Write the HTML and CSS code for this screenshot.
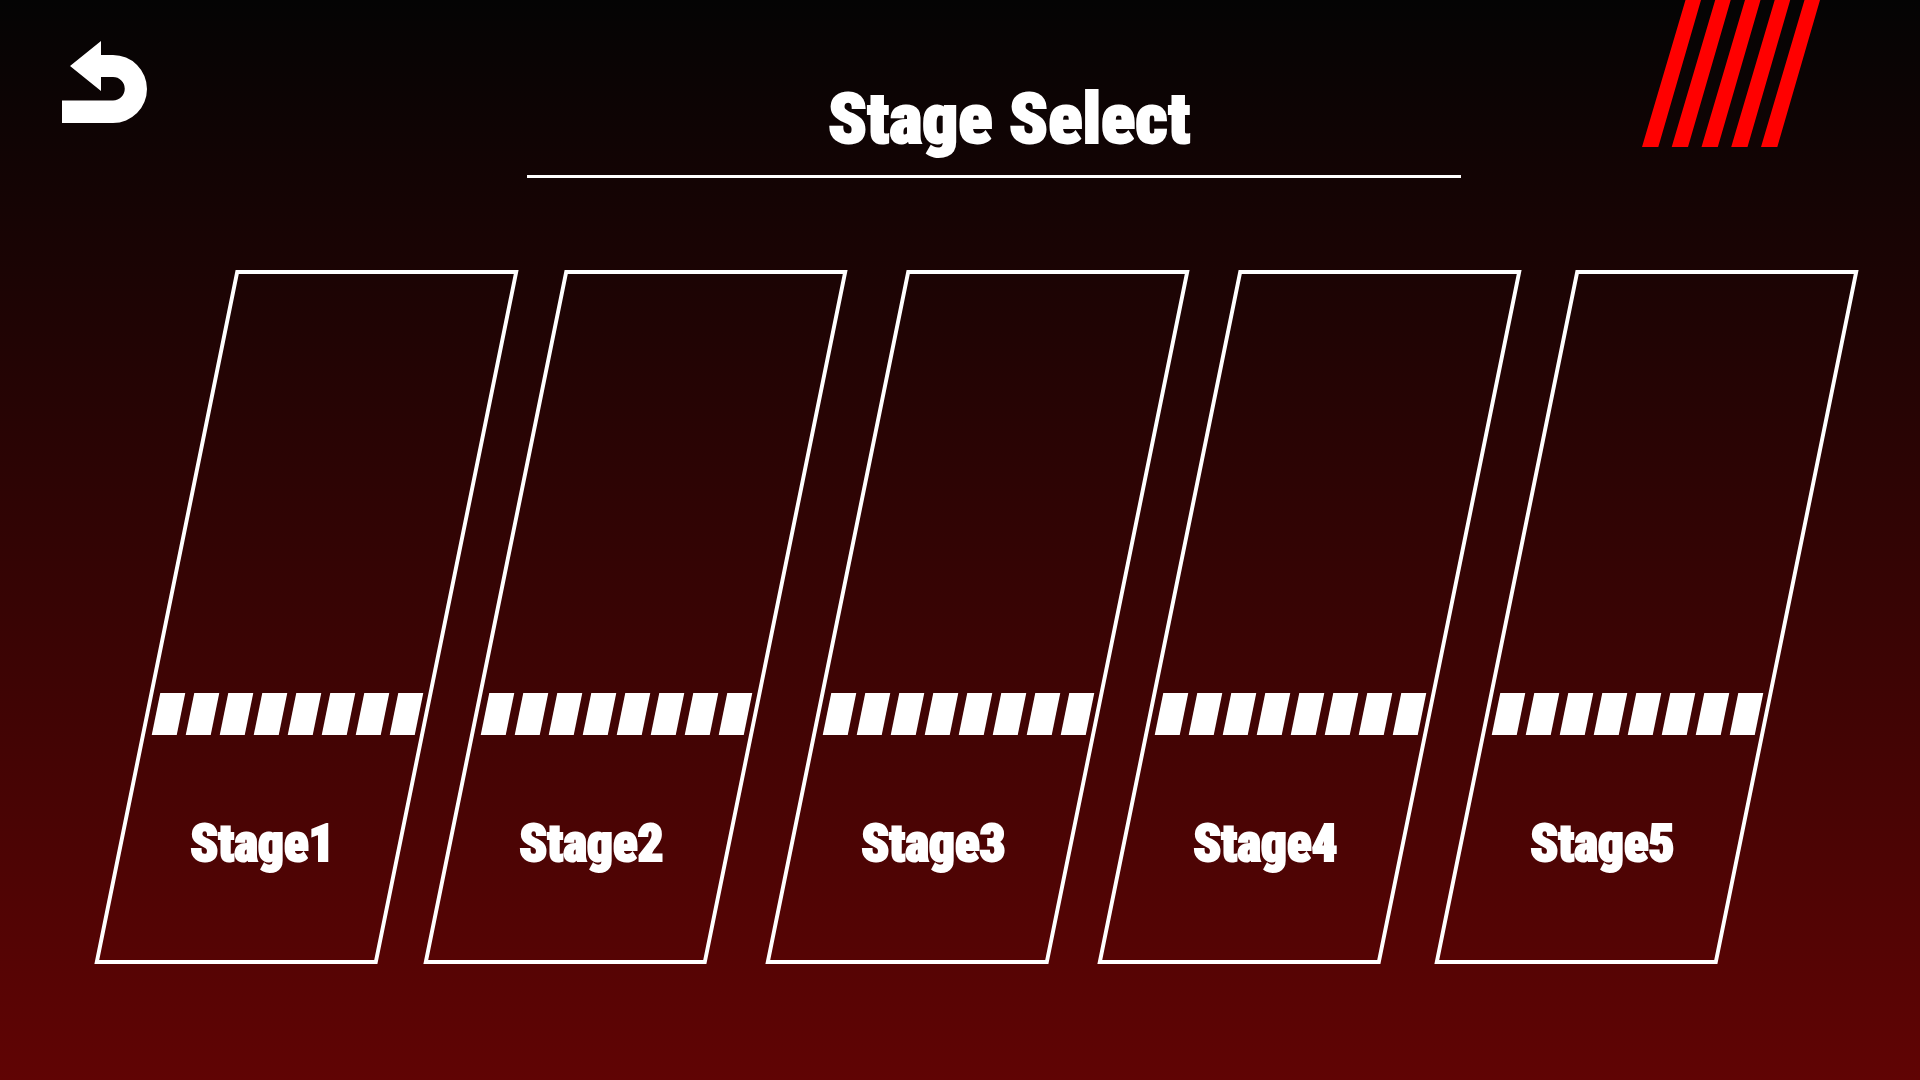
FILE: index.html
```html
<!DOCTYPE html>
<html lang="en">
<head>
  <meta charset="utf-8">
  <meta name="viewport" content="width=device-width, initial-scale=1">
  <title>Stage Select</title>
  <link rel="stylesheet" href="styles.css">
</head>
<body>
  <header class="header">
    <button class="back" type="button" aria-label="Back">
      <svg class="back-icon" viewBox="0 0 85 82" aria-hidden="true">
        <path fill="currentColor" d="M8 25 39 0V14H51A34 34 0 0 1 51 82H0V59.500H51A11.700 11.700 0 0 0 51 36H39V50Z"/>
      </svg>
    </button>
    <h1 class="title">Stage Select</h1>
    <svg class="slashes" viewBox="0 0 178 147" aria-hidden="true">
      <path fill="currentColor" d="M43.500 0H59L16.300 147H0ZM73.200 0H88.700L46 147H29.700ZM103 0H118.500L75.800 147H59.500ZM132.700 0H148.200L105.500 147H89.200ZM162.500 0H178L135.300 147H119Z"/>
    </svg>
  </header>
  <main class="stages">
    <button class="stage" type="button">
      <span class="stripes"><i></i><i></i><i></i><i></i><i></i><i></i><i></i><i></i></span>
      <span class="label">Stage1</span>
    </button>
    <button class="stage" type="button">
      <span class="stripes"><i></i><i></i><i></i><i></i><i></i><i></i><i></i><i></i></span>
      <span class="label">Stage2</span>
    </button>
    <button class="stage" type="button">
      <span class="stripes"><i></i><i></i><i></i><i></i><i></i><i></i><i></i><i></i></span>
      <span class="label">Stage3</span>
    </button>
    <button class="stage" type="button">
      <span class="stripes"><i></i><i></i><i></i><i></i><i></i><i></i><i></i><i></i></span>
      <span class="label">Stage4</span>
    </button>
    <button class="stage" type="button">
      <span class="stripes"><i></i><i></i><i></i><i></i><i></i><i></i><i></i><i></i></span>
      <span class="label">Stage5</span>
    </button>
  </main>
</body>
</html>
```
FILE: styles.css
```css
* {
  box-sizing: border-box;
}

body {
  margin: 0;
  min-height: 100vh;
  background: linear-gradient(#040404, #600404);
  color: #fff;
  font-family: Impact, "Roboto Condensed", "Liberation Sans Narrow", "Liberation Sans", sans-serif;
  font-weight: 900;
}

button {
  padding: 0;
  border: 0;
  background: none;
  color: inherit;
  font: inherit;
  cursor: pointer;
}

.header {
  display: grid;
  grid-template-columns: 465fr 934fr 359fr;
  align-items: start;
  padding: 0 100px 0 62px;
}

.back {
  justify-self: start;
  margin-top: 41px;
}

.back-icon {
  display: block;
  width: 85px;
  height: 82px;
}

.title {
  margin: 0;
  padding: 75px 0 12px 30px;
  border-bottom: 3px solid #fff;
  font-size: 71px;
  font-weight: 900;
  line-height: 88px;
  text-align: center;
  white-space: nowrap;
  -webkit-text-stroke: 2px #fff;
}

.slashes {
  justify-self: end;
  width: 178px;
  height: 147px;
  color: #f00;
}

.stages {
  display: grid;
  grid-template-columns: 329fr 342fr 332fr 337fr 283fr;
  padding: 92px 132px 100px 165px;
}

.stage {
  position: relative;
  display: flex;
  flex-direction: column;
  align-items: center;
  width: 283px;
  height: 694px;
  padding-top: 423px;
}

.stage::before {
  content: "";
  position: absolute;
  inset: 0;
  border: 4px solid #fff;
  transform: skewX(-11.5deg);
}

.stripes {
  display: flex;
  gap: 9px;
  margin-right: 38px;
}

.stripes i {
  width: 25px;
  height: 42px;
  background: #fff;
  transform: skewX(-11.5deg);
}

.label {
  margin: 77px 88px 0 0;
  font-size: 51px;
  line-height: 64px;
  -webkit-text-stroke: 2px #fff;
}
```
